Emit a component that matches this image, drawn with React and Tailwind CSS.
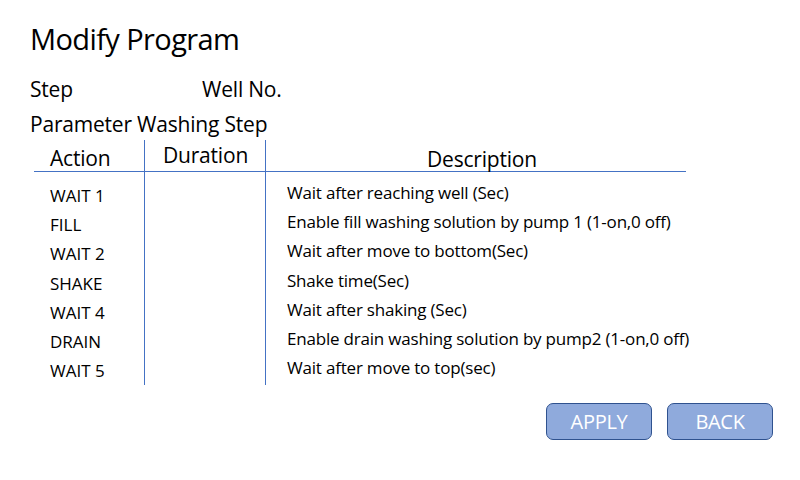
const rows = [
  { action: "WAIT 1", desc: "Wait after reaching well (Sec)" },
  { action: "FILL", desc: "Enable fill washing solution by pump 1 (1-on,0 off)" },
  { action: "WAIT 2", desc: "Wait after move to bottom(Sec)" },
  { action: "SHAKE", desc: "Shake time(Sec)" },
  { action: "WAIT 4", desc: "Wait after shaking (Sec)" },
  { action: "DRAIN", desc: "Enable drain washing solution by pump2 (1-on,0 off)" },
  { action: "WAIT 5", desc: "Wait after move to top(sec)" },
];

export default function App() {
  return (
    <main className="w-[800px] h-[480px] bg-white text-black font-['Open_Sans',sans-serif] overflow-hidden">
      <h1 className="pl-[30px] pt-[22px] text-[29px] leading-[34px] tracking-[-0.6px]">
        Modify Program
      </h1>
      <div className="flex pl-[30px] mt-[18px] text-[21px] leading-[30px] tracking-[-0.2px]">
        <span className="w-[172px]">Step</span>
        <span>Well No.</span>
      </div>
      <p className="pl-[30px] mt-[5px] text-[21px] leading-[30px] tracking-[-0.2px]">
        Parameter Washing Step
      </p>

      <div className="ml-[34px] mt-[1px] w-[652px]">
        <div className="grid grid-cols-[110px_121px_421px] h-[32px] border-b border-[#4472c4] text-[21px] leading-[30px] tracking-[-0.2px]">
          <div className="pl-[16px] pt-[3px]">Action</div>
          <div className="border-l border-[#4472c4] pl-[18px]">Duration</div>
          <div className="border-l border-[#4472c4] pl-[161px] pt-[4px]">Description</div>
        </div>
        <div className="grid grid-cols-[110px_121px_421px] h-[211px] text-[17px]">
          <div className="flex flex-col pl-[16px] pt-[9px]">
            {rows.map((r) => (
              <div key={r.action} className="h-[29.2px] leading-[29px]">
                {r.action}
              </div>
            ))}
          </div>
          <div className="border-l border-[#4472c4]" />
          <div className="flex flex-col border-l border-[#4472c4] pl-[21px] pt-[6px] tracking-[-0.2px]">
            {rows.map((r) => (
              <div key={r.action} className="h-[29.2px] leading-[29px] whitespace-nowrap">
                {r.desc}
              </div>
            ))}
          </div>
        </div>
      </div>

      <div className="flex justify-end gap-[15px] pr-[27px] mt-[20px]">
        <button className="w-[106px] h-[37px] rounded-[7px] bg-[#8faadc] border border-[#2f528f] text-white text-[20px] tracking-[-0.3px]">
          APPLY
        </button>
        <button className="w-[106px] h-[37px] rounded-[7px] bg-[#8faadc] border border-[#2f528f] text-white text-[20px] tracking-[-0.3px]">
          BACK
        </button>
      </div>
    </main>
  );
}
